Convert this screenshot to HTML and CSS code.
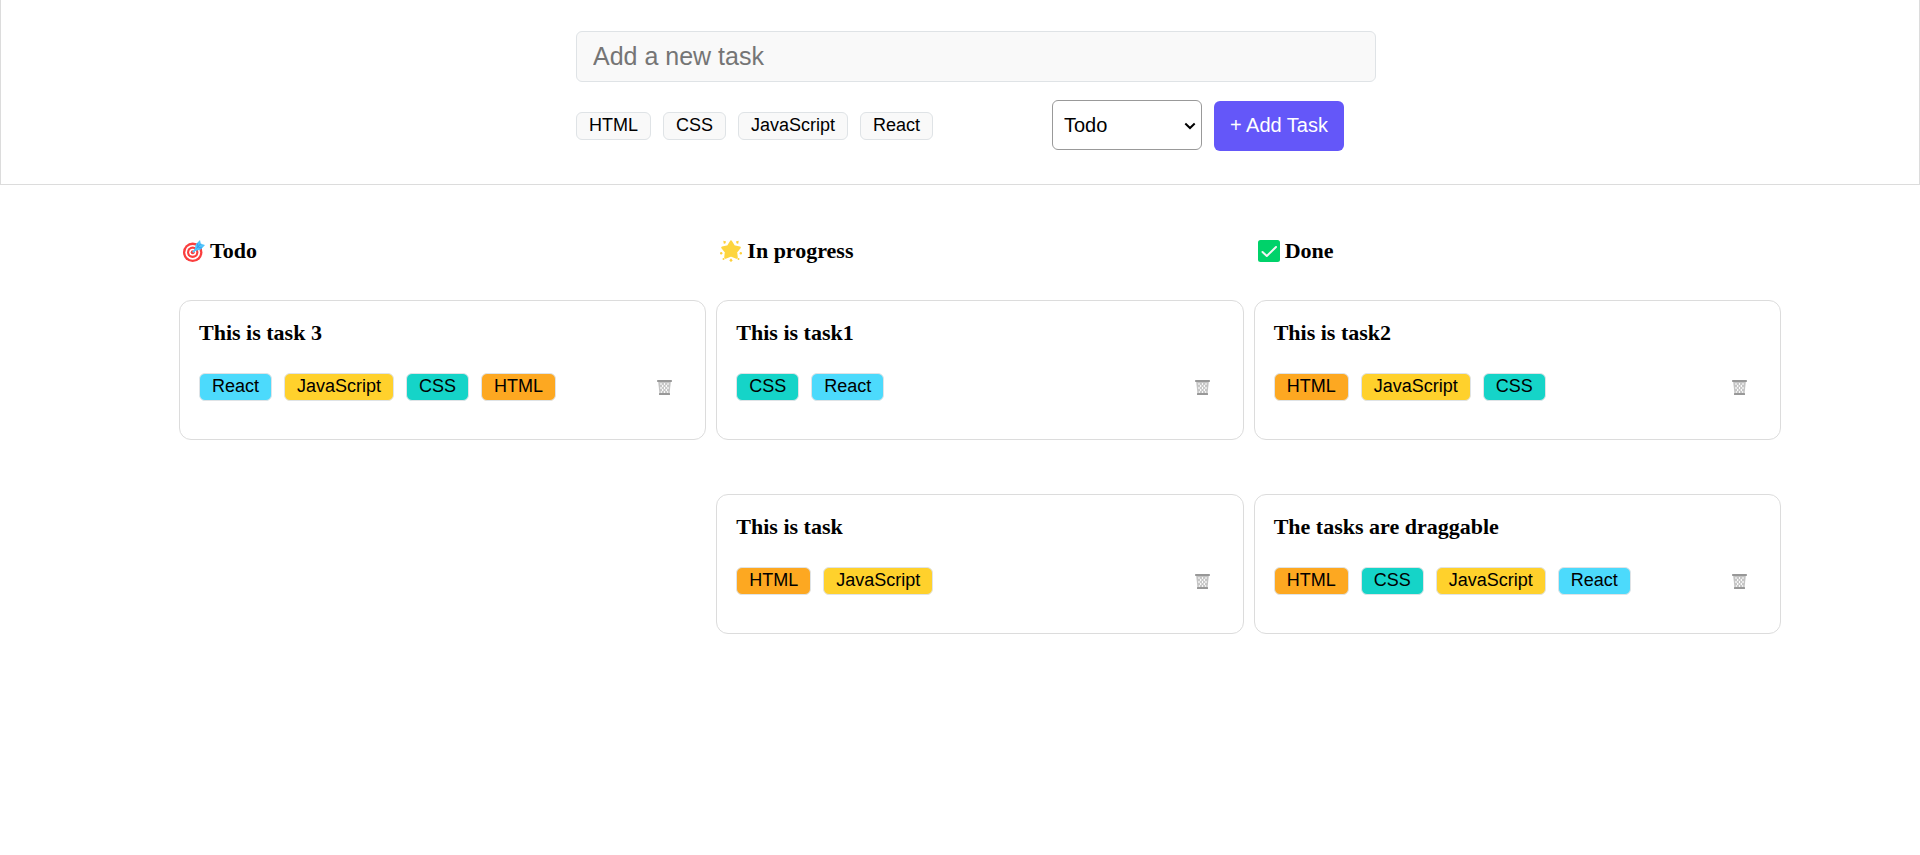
FILE: index.html
```html
<!DOCTYPE html>
<html lang="en">
<head>
<meta charset="utf-8">
<title>Task board</title>
<link rel="stylesheet" href="styles.css">
</head>
<body>
<svg class="sprite" aria-hidden="true">
  <symbol id="trash" viewBox="0 0 15 15">
    <path d="M1.200 2h12.600l-1.300 12H2.500z" fill="#c4c4c4"/>
    <g fill="#fff">
      <ellipse cx="4" cy="4" rx="0.700" ry="1.100"/>
      <ellipse cx="7.500" cy="4" rx="0.700" ry="1.100"/>
      <ellipse cx="11" cy="4" rx="0.700" ry="1.100"/>
      <ellipse cx="5.700" cy="6" rx="0.700" ry="1.200"/>
      <ellipse cx="9.300" cy="6" rx="0.700" ry="1.200"/>
      <ellipse cx="4" cy="8" rx="0.700" ry="1.200"/>
      <ellipse cx="7.500" cy="8" rx="0.700" ry="1.200"/>
      <ellipse cx="11" cy="8" rx="0.700" ry="1.200"/>
      <ellipse cx="5.700" cy="10" rx="0.700" ry="1.200"/>
      <ellipse cx="9.300" cy="10" rx="0.700" ry="1.200"/>
      <ellipse cx="4.300" cy="12" rx="0.600" ry="1"/>
      <ellipse cx="7.500" cy="12" rx="0.700" ry="1"/>
      <ellipse cx="10.700" cy="12" rx="0.600" ry="1"/>
    </g>
    <rect x="0" y="0" width="15" height="2" rx="0.800" fill="#989898"/>
    <rect x="2" y="13" width="11" height="2" rx="0.500" fill="#989898"/>
  </symbol>
</svg>

<header class="header">
  <form class="form">
    <input class="task-input" type="text" placeholder="Add a new task" aria-label="Add a new task">
    <div class="form-row">
      <div class="tags">
        <button class="tag" type="button">HTML</button>
        <button class="tag" type="button">CSS</button>
        <button class="tag" type="button">JavaScript</button>
        <button class="tag" type="button">React</button>
      </div>
      <div class="actions">
        <div class="status-field">
          <select class="status" aria-label="Status">
            <option>Todo</option>
            <option>In progress</option>
            <option>Done</option>
          </select>
          <svg class="chevron" viewBox="0 0 12 8" aria-hidden="true"><path d="M1.300 1.500L6 6l4.700-4.500" fill="none" stroke="#000" stroke-width="2"/></svg>
        </div>
        <button class="submit" type="submit">+ Add Task</button>
      </div>
    </div>
  </form>
</header>

<main class="board">
  <section class="column">
    <h2 class="column-title">
      <svg class="column-icon" viewBox="0 0 22 22" aria-hidden="true">
        <circle cx="9.700" cy="12.300" r="9.700" fill="#fa3e3e"/>
        <circle cx="9.700" cy="12.300" r="7.400" fill="#fff"/>
        <circle cx="9.700" cy="12.300" r="5.700" fill="#fa3e3e"/>
        <circle cx="9.700" cy="12.300" r="3.500" fill="#fff"/>
        <circle cx="9.700" cy="12.300" r="2" fill="#fa3e3e"/>
        <path d="M9.700 12.300L14 8" stroke="#4fc3fb" stroke-width="1.800"/>
        <path d="M11.200 11.200l1.600-7L17 0l.8 3.700L22 5l-4.200 4.600z" fill="#4fc3fb"/>
        <path d="M13.500 8.500l4.300-4.800M14.500 3.500l.5 3.500M19 8l-3.500-.5" fill="none" stroke="#2e93e8" stroke-width="0.800"/>
      </svg>
      Todo
    </h2>
    <article class="card" draggable="true">
      <h3 class="card-title">This is task 3</h3>
      <div class="card-row">
        <div class="tags">
          <span class="tag react">React</span>
          <span class="tag js">JavaScript</span>
          <span class="tag css">CSS</span>
          <span class="tag html">HTML</span>
        </div>
        <button class="delete" type="button" aria-label="Delete task"><svg class="trash"><use href="#trash"/></svg></button>
      </div>
    </article>
  </section>

  <section class="column">
    <h2 class="column-title">
      <svg class="column-icon" viewBox="0 0 22 22" aria-hidden="true">
        <path d="M11 1.500l3 4.900 5.700 1.200-3.600 4.400.6 5.600L11 15.400l-5.700 2.200.6-5.600-3.600-4.400L8 6.400z" fill="#fdd53f" stroke="#fdd53f" stroke-width="2.200" stroke-linejoin="round"/>
        <g fill="#fdd03c">
          <path d="M3.300.8l2.800.8-.8 2-1.500.2zM18.700.8l-2.800.8.8 2 1.500.2zM11 18.200l1.700 2.400L11 22l-1.700-1.400z"/>
          <circle cx="1.200" cy="13.300" r="1.200"/>
          <circle cx="20.800" cy="13.300" r="1.200"/>
          <circle cx="3.500" cy="19" r="1"/>
          <circle cx="18.500" cy="19" r="1"/>
        </g>
      </svg>
      In progress
    </h2>
    <article class="card" draggable="true">
      <h3 class="card-title">This is task1</h3>
      <div class="card-row">
        <div class="tags">
          <span class="tag css">CSS</span>
          <span class="tag react">React</span>
        </div>
        <button class="delete" type="button" aria-label="Delete task"><svg class="trash"><use href="#trash"/></svg></button>
      </div>
    </article>
    <article class="card" draggable="true">
      <h3 class="card-title">This is task</h3>
      <div class="card-row">
        <div class="tags">
          <span class="tag html">HTML</span>
          <span class="tag js">JavaScript</span>
        </div>
        <button class="delete" type="button" aria-label="Delete task"><svg class="trash"><use href="#trash"/></svg></button>
      </div>
    </article>
  </section>

  <section class="column">
    <h2 class="column-title">
      <svg class="column-icon" viewBox="0 0 22 22" aria-hidden="true">
        <rect width="22" height="22" rx="2.500" fill="#00d26a"/>
        <path d="M4.500 12l4.300 4L18 7" fill="none" stroke="#f4f4f4" stroke-width="2" stroke-linecap="round" stroke-linejoin="round"/>
      </svg>
      Done
    </h2>
    <article class="card" draggable="true">
      <h3 class="card-title">This is task2</h3>
      <div class="card-row">
        <div class="tags">
          <span class="tag html">HTML</span>
          <span class="tag js">JavaScript</span>
          <span class="tag css">CSS</span>
        </div>
        <button class="delete" type="button" aria-label="Delete task"><svg class="trash"><use href="#trash"/></svg></button>
      </div>
    </article>
    <article class="card" draggable="true">
      <h3 class="card-title">The tasks are draggable</h3>
      <div class="card-row">
        <div class="tags">
          <span class="tag html">HTML</span>
          <span class="tag css">CSS</span>
          <span class="tag js">JavaScript</span>
          <span class="tag react">React</span>
        </div>
        <button class="delete" type="button" aria-label="Delete task"><svg class="trash"><use href="#trash"/></svg></button>
      </div>
    </article>
  </section>
</main>
</body>
</html>
```

FILE: styles.css
```css
* {
  box-sizing: border-box;
}

body {
  margin: 0;
  background: #fff;
  color: #000;
  font-family: "Liberation Serif", "Times New Roman", serif;
}

button,
input,
select {
  font-family: "Liberation Sans", Arial, sans-serif;
}

.sprite {
  display: none;
}

.header {
  display: flex;
  justify-content: center;
  padding: 31px 0 33px 32px;
  border: 1px solid #dcdcdc;
  border-top: 0;
}

.form {
  width: 100%;
  max-width: 800px;
}

.task-input {
  display: block;
  width: 100%;
  padding: 10px 16px;
  border: 1px solid #dfe3e6;
  border-radius: 6px;
  background: #f9f9f9;
  color: #000;
  font-size: 25px;
  line-height: 29px;
}

.task-input::placeholder {
  color: #757575;
}

.form-row {
  display: flex;
  flex-wrap: wrap;
  align-items: center;
  justify-content: space-between;
  gap: 12px;
  margin-top: 18px;
  padding-right: 32px;
}

.tags {
  display: flex;
  flex-wrap: wrap;
  gap: 12px;
}

.tag {
  padding: 2px 12px 3px;
  border: 1px solid #dfe3e6;
  border-radius: 6px;
  background: #f9f9f9;
  color: #000;
  font-family: "Liberation Sans", Arial, sans-serif;
  font-size: 18px;
  line-height: 21px;
}

.html {
  background: #fda821;
}

.css {
  background: #15d4c8;
}

.js {
  background: #ffd12c;
}

.react {
  background: #4cdafc;
}

.actions {
  display: flex;
  align-items: flex-end;
  gap: 12px;
  height: 51px;
}

.status-field {
  position: relative;
  align-self: flex-start;
}

.status {
  display: block;
  width: 150px;
  height: 50px;
  padding: 0 32px 0 11px;
  border: 1px solid #999;
  border-radius: 6px;
  background: #fff;
  color: #000;
  font-size: 20px;
  appearance: none;
}

.chevron {
  position: absolute;
  top: 22px;
  right: 6px;
  width: 12px;
  height: 8px;
  pointer-events: none;
}

.submit {
  height: 50px;
  padding: 0 16px 2px;
  border: 0;
  border-radius: 6px;
  background: #6457f9;
  color: #fff;
  font-size: 20px;
}

.board {
  display: grid;
  grid-template-columns: repeat(3, 1fr);
  gap: 10px;
  padding: 53px 139px 54px 179px;
}

.column-title {
  display: flex;
  align-items: center;
  gap: 5px;
  margin: 0 0 37px;
  padding-left: 4px;
  font-size: 22px;
  line-height: 25px;
}

.column-icon {
  width: 22px;
  height: 22px;
}

.card {
  padding: 19px 33px 38px 19px;
  border: 1px solid #dcdcdc;
  border-radius: 12px;
}

.card + .card {
  margin-top: 54px;
}

.card-title {
  margin: 0 0 28px;
  font-size: 22px;
  line-height: 25px;
}

.card-row {
  display: flex;
  align-items: center;
  justify-content: space-between;
}

.delete {
  display: flex;
  padding: 0;
  border: 0;
  background: none;
}

.trash {
  width: 15px;
  height: 15px;
}
```
